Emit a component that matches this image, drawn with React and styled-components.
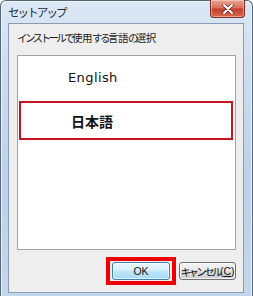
import React from "react";
import styled, { createGlobalStyle } from "styled-components";

const Global = createGlobalStyle`
  html, body { margin: 0; padding: 0; background: #ffffff; }
  body { font-family: "Noto Sans CJK JP", "Noto Sans", sans-serif; }
`;

const Window = styled.div`
  box-sizing: border-box;
  width: 253px;
  height: 296px;
  display: flex;
  flex-direction: column;
  padding: 0 8px 3px 7px;
  border: 1px solid #54667e;
  border-bottom: none;
  border-radius: 6px 6px 0 0;
  background: linear-gradient(180deg, #dbe7f5 0%, #c9dbef 30%, #bcd1ea 60%, #c3d6ec 100%);
  box-shadow: inset 1px 1px 0 #eef4fb, inset -1px 0 0 #eef4fb;
`;

const TitleBar = styled.div`
  height: 22px;
  display: flex;
  align-items: flex-start;
  justify-content: space-between;
  margin-right: -1px;
`;

const Title = styled.div`
  padding-top: 3px;
  font-size: 11.5px;
  line-height: 16px;
  color: #1f2a36;
  letter-spacing: -1.9px;
  white-space: nowrap;
`;

const CloseButton = styled.div`
  width: 35px;
  height: 18px;
  margin-top: -1px;
  box-sizing: border-box;
  border: 1px solid #7a2a20;
  border-top: none;
  border-radius: 0 0 4px 4px;
  background: linear-gradient(180deg, #e9a797 0%, #d8705d 45%, #c4402c 55%, #d86a4e 100%);
  box-shadow: inset 0 0 0 1px rgba(255, 220, 210, 0.5);
  display: flex;
  align-items: center;
  justify-content: center;
`;

const Client = styled.div`
  flex: 1;
  display: flex;
  flex-direction: column;
  box-sizing: border-box;
  border: 1px solid #8c9cb0;
  background: #eeeeee;
  padding: 6px 7px 0 8px;
`;

const Prompt = styled.div`
  font-size: 10.5px;
  line-height: 16px;
  color: #1a1a1a;
  white-space: nowrap;
  letter-spacing: -0.5px;
`;

const Kana = styled.span`
  letter-spacing: -2.6px;
`;

const ListBox = styled.div`
  margin-top: 9px;
  height: 195px;
  box-sizing: border-box;
  border: 1px solid #a3a3a3;
  background: #ffffff;
  padding: 2px 2px 0 1px;
  display: flex;
  flex-direction: column;
  gap: 4px;
`;

const Item = styled.div`
  height: 39px;
  box-sizing: border-box;
  border: 2px solid ${(p) => (p.$selected ? "#c8141e" : "transparent")};
  display: flex;
  align-items: center;
  padding-left: ${(p) => p.$indent}px;
  color: #111111;
  font-family: ${(p) =>
    p.$cjk ? '"Noto Sans CJK JP", sans-serif' : '"DejaVu Sans", "Noto Sans", sans-serif'};
  font-size: ${(p) => (p.$cjk ? 14 : 13)}px;
  font-weight: ${(p) => (p.$cjk ? 700 : 400)};
  letter-spacing: ${(p) => (p.$cjk ? 0 : 0.4)}px;
`;

const ButtonRow = styled.div`
  margin-top: 12px;
  display: flex;
  justify-content: flex-end;
  align-items: flex-start;
  gap: 9px;
`;

const Highlight = styled.div`
  margin: -5px -6px;
  padding: 1px 2px;
  border: 4px solid #ee0000;
  display: flex;
`;

const Button = styled.div`
  height: 18px;
  width: ${(p) => p.$w}px;
  box-sizing: border-box;
  border: 1px solid ${(p) => (p.$default ? "#3c7fb1" : "#707070")};
  border-radius: 3px;
  background: ${(p) =>
    p.$default
      ? "linear-gradient(180deg, #eaf6fd 0%, #d9f0fc 45%, #bee6fd 50%, #a7d9f5 100%)"
      : "linear-gradient(180deg, #f2f2f2 0%, #ebebeb 45%, #dddddd 50%, #cfcfcf 100%)"};
  box-shadow: inset 0 0 0 1px rgba(255, 255, 255, 0.7);
  display: flex;
  align-items: center;
  justify-content: center;
  font-family: "Liberation Sans", "Noto Sans CJK JP", sans-serif;
  font-size: 10.5px;
  color: #111111;
  white-space: nowrap;
`;

const Ul = styled.span`
  text-decoration: underline;
`;

export default function App() {
  return (
    <>
      <Global />
      <Window>
        <TitleBar>
          <Title>セットアップ</Title>
          <CloseButton>
            <svg width="12" height="10" viewBox="0 0 12 10">
              <path d="M2 1 L10 9 M10 1 L2 9" stroke="#5a2418" strokeWidth="3.2" strokeLinecap="round" />
              <path d="M2 1 L10 9 M10 1 L2 9" stroke="#ffffff" strokeWidth="2" strokeLinecap="round" />
            </svg>
          </CloseButton>
        </TitleBar>
        <Client>
          <Prompt>
            <Kana>インストールで</Kana>使用<Kana>する</Kana>言語<Kana>の</Kana>選択
          </Prompt>
          <ListBox>
            <Item $indent={47}>English</Item>
            <Item $indent={50} $cjk $selected>日本語</Item>
          </ListBox>
          <ButtonRow>
            <Highlight>
              <Button $w={58} $default>OK</Button>
            </Highlight>
            <Button $w={57}>
              <Kana>キャンセル</Kana>(<Ul>C</Ul>)
            </Button>
          </ButtonRow>
        </Client>
      </Window>
    </>
  );
}
